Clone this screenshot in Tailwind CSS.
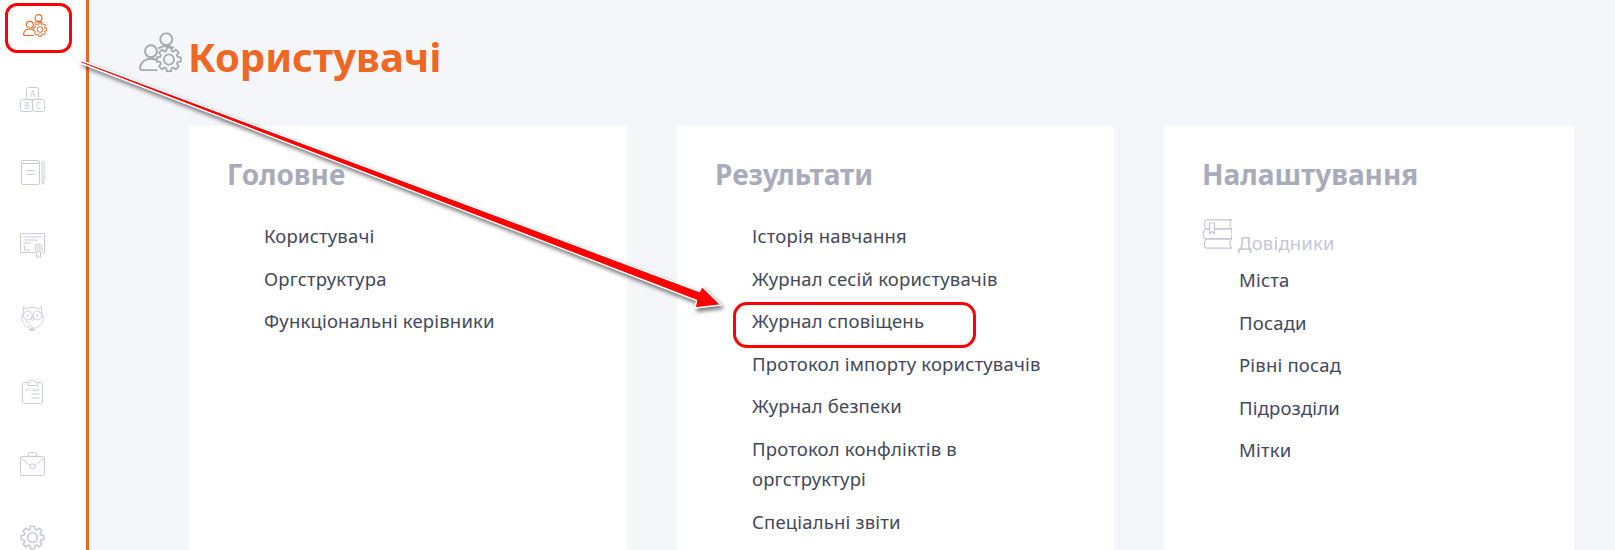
<!doctype html>
<html lang="uk">
<head>
<meta charset="utf-8">
<title>Користувачі</title>
<script src="https://cdn.jsdelivr.net/npm/@tailwindcss/browser@4"></script>
</head>
<body class="font-['Noto_Sans',sans-serif]">
<svg class="absolute w-0 h-0" aria-hidden="true">
  <symbol id="gear" viewBox="0 0 24 24">
    <path d="M22.83 13.91L19.84 14.4L19.24 15.85L21.01 18.31L18.31 21.01L15.85 19.24L14.4 19.84L13.91 22.83L10.09 22.83L9.6 19.84L8.15 19.24L5.69 21.01L2.99 18.31L4.76 15.85L4.16 14.4L1.17 13.91L1.17 10.09L4.16 9.6L4.76 8.15L2.99 5.69L5.69 2.99L8.15 4.76L9.6 4.16L10.09 1.17L13.91 1.17L14.4 4.16L15.85 4.76L18.31 2.99L21.01 5.69L19.24 8.15L19.84 9.6L22.83 10.09Z" fill="none" stroke="currentColor" stroke-width="1.6" stroke-linejoin="round"/>
    <circle cx="12" cy="12" r="4.6" fill="none" stroke="currentColor" stroke-width="1.6"/>
  </symbol>
  <symbol id="usersgear" viewBox="0 0 25 23">
    <g fill="none" stroke="currentColor" stroke-width="1.1">
      <circle cx="15.5" cy="4" r="3.4"/>
      <circle cx="6.8" cy="10.8" r="3.4"/>
      <path d="M10.5 21.5H2C1 21.5 .4 20.8 .6 19.8C1.1 17 3.5 15 6.8 15C8.2 15 9.4 15.4 10.4 16"/>
      <path d="M11 9.2C12.2 8.2 13.8 7.8 15.5 7.8C17.2 7.8 18.6 8.2 19.8 9"/>
    </g>
    <use href="#gear" x="9.5" y="8" width="15" height="15"/>
  </symbol>
</svg>

<div class="flex h-[550px] w-[1615px] overflow-hidden bg-[#f4f6fa] relative">
  <aside class="w-[89px] shrink-0 h-full bg-white border-r-[3px] border-[#ee6723] flex flex-col items-start gap-[48px] pl-[20px] pt-[14px] text-[#c9cadc]">
    <svg class="w-[25px] h-[25px] shrink-0 ml-[3px] -mt-[1px] mb-[1px] text-[#ee6723]" viewBox="0 0 25 25"><use href="#usersgear" x="0" y="1" width="25" height="23"/></svg>
    <svg class="w-[25px] h-[25px] shrink-0" viewBox="0 0 25 25" fill="none" stroke="currentColor" stroke-width="1">
      <rect x="6.5" y=".5" width="12" height="12" rx="2"/><rect x=".5" y="12.5" width="12" height="12" rx="2"/><rect x="12.5" y="12.5" width="12" height="12" rx="2"/>
      <text x="12.5" y="9.6" text-anchor="middle" font-size="8" fill="currentColor" stroke="none">A</text>
      <text x="6.5" y="21.6" text-anchor="middle" font-size="8" fill="currentColor" stroke="none">B</text>
      <text x="18.5" y="21.6" text-anchor="middle" font-size="8" fill="currentColor" stroke="none">C</text>
    </svg>
    <svg class="w-[25px] h-[25px] shrink-0" viewBox="0 0 25 25" fill="none" stroke="currentColor" stroke-width="1">
      <rect x="1.5" y=".5" width="18" height="24" rx="1.5"/><path d="M1.5 3.5H19.5M6.5 10.5H14.5M6.5 14.5H14.5"/>
      <path d="M22 2.5C22 1 24.2 1 24.2 2.5V21.5L23.1 24.5L22 21.5Z"/>
    </svg>
    <svg class="w-[25px] h-[25px] shrink-0" viewBox="0 0 25 25" fill="none" stroke="currentColor" stroke-width="1">
      <path d="M15 19.5H.5V.5H24.5V19.5H22"/><path d="M3.5 4H21.5M3.5 7H18M3.5 10H11M4.5 17V13M4.5 17H10"/>
      <circle cx="18.5" cy="15" r="3.8"/><circle cx="18.5" cy="15" r="1.6"/><path d="M16.5 18.5V24.5L18.5 23L20.5 24.5V18.5"/>
    </svg>
    <svg class="w-[25px] h-[25px] shrink-0" viewBox="0 0 25 25" fill="none" stroke="currentColor" stroke-width=".9">
      <path d="M3.5.5L6 2.8C8 1.8 11 1.4 12.5 1.4C14 1.4 17 1.8 19 2.8L21.5.5V7C23 9 23.5 11 23 14C22 19 17 22.5 12.5 22.5C8 22.5 3 19 2 14C1.5 11 2 9 3.5 7Z"/>
      <circle cx="7.8" cy="9.5" r="4.4"/><circle cx="17.2" cy="9.5" r="4.4"/><path d="M12.5 10L11 13L12.5 15L14 13ZM6 14.5C8 19 11 20.5 14.5 22M9 23.5H14M10 24.5H15"/>
      <circle cx="7.8" cy="9.5" r=".6" fill="currentColor"/><circle cx="17.2" cy="9.5" r=".6" fill="currentColor"/>
    </svg>
    <svg class="w-[25px] h-[25px] shrink-0" viewBox="0 0 25 25" fill="none" stroke="currentColor" stroke-width="1">
      <path d="M7.5 3.5H4.5C3.3 3.5 2.5 4.3 2.5 5.5V22.5C2.5 23.7 3.3 24.5 4.5 24.5H20.5C21.7 24.5 22.5 23.7 22.5 22.5V5.5C22.5 4.3 21.7 3.5 20.5 3.5H17.5"/>
      <path d="M7.5 6.5V3.5L10 2.8C10.5 .3 14.5 .3 15 2.8L17.5 3.5V6.5Z"/>
      <path d="M5.5 10.5L7 12L9.5 9M11.5 11H19.5M11.5 15H19.5M11.5 19H19.5"/>
    </svg>
    <svg class="w-[25px] h-[25px] shrink-0" viewBox="0 0 25 25" fill="none" stroke="currentColor" stroke-width="1">
      <rect x=".5" y="4.5" width="24" height="19" rx="1"/><path d="M.5 5.5L10 13.5M24.5 5.5L15 13.5M8.5 4.5V1.5C8.5 1 9 .5 9.5 .5H15.5C16 .5 16.5 1 16.5 1.5V4.5"/>
      <rect x="10" y="12" width="5" height="5" rx="2"/>
    </svg>
    <svg class="w-[25px] h-[25px] shrink-0" viewBox="0 0 25 25"><use href="#gear" width="25" height="25"/></svg>
  </aside>

  <main class="flex-1 min-w-0">
    <div class="flex items-start pl-[50px] pt-[32px] h-[126px]">
      <svg class="w-[44px] h-[41px] shrink-0 text-[#a9a9a9]" viewBox="0 0 25 23"><use href="#usersgear"/></svg>
      <h1 class="ml-[5px] -mt-[3px] text-[40px] leading-[56px] font-bold text-[#ee6723]">Користувачі</h1>
    </div>
    <div class="flex gap-[50px] pl-[100px] h-[424px]">
      <section class="w-[438px] shrink-0 bg-white pl-[38px] pt-[27px]">
        <h2 class="text-[28px] leading-[42px] font-bold text-[#a9abbb]">Головне</h2>
        <ul class="mt-[26px] pl-[37px] text-[18.5px] tracking-[0.18px] leading-[30px] text-[#43475a] flex flex-col gap-[12.6px]">
          <li>Користувачі</li><li>Оргструктура</li><li>Функціональні керівники</li>
        </ul>
      </section>
      <section class="w-[437px] shrink-0 bg-white pl-[38px] pt-[27px]">
        <h2 class="text-[28px] leading-[42px] font-bold text-[#a9abbb]">Результати</h2>
        <ul class="mt-[26px] pl-[37px] pr-[60px] text-[18.5px] tracking-[0.18px] leading-[30px] text-[#43475a] flex flex-col gap-[12.6px]">
          <li>Історія навчання</li><li>Журнал сесій користувачів</li><li>Журнал сповіщень</li><li>Протокол імпорту користувачів</li><li>Журнал безпеки</li><li>Протокол конфліктів в оргструктурі</li><li>Спеціальні звіти</li>
        </ul>
      </section>
      <section class="w-[410px] shrink-0 bg-white pl-[38px] pt-[27px]">
        <h2 class="text-[28px] leading-[42px] font-bold text-[#a9abbb]">Налаштування</h2>
        <div class="mt-[24px] flex items-end text-[#c5c6d6]">
          <svg class="w-[30px] h-[30px] shrink-0" viewBox="0 0 30 30" fill="none" stroke="currentColor" stroke-width="1.2">
            <path d="M29.5.8H5C1.5.8 1.5 9.8 5 9.8H29.5C27.5 8 27.5 2.6 29.5.8Z"/>
            <path d="M29.5 9.8H4C.5 9.8.5 19.8 4 19.8H29.5C30 17 30 12.6 29.5 9.8Z"/>
            <path d="M29.5 19.8H5C1.5 19.8 1.5 29.2 5 29.2H29.5C27.5 27.5 27.5 21.5 29.5 19.8Z"/>
            <path d="M7.5 4V14.5L10 12.5L12.5 14.5V4Z" fill="#fff"/>
          </svg>
          <span class="ml-[6px] text-[18.5px] tracking-[0.18px] leading-[26px] -mb-[7px]">Довідники</span>
        </div>
        <ul class="mt-[16px] pl-[37px] text-[18.5px] tracking-[0.18px] leading-[30px] text-[#43475a] flex flex-col gap-[12.6px]">
          <li>Міста</li><li>Посади</li><li>Рівні посад</li><li>Підрозділи</li><li>Мітки</li>
        </ul>
      </section>
    </div>
  </main>

  <div class="absolute left-[5px] top-[3px] w-[67px] h-[50px] border-[3px] border-[#f00] rounded-[12px]"></div>
  <div class="absolute left-[733px] top-[302px] w-[243px] h-[46px] border-[3px] border-[#f00] rounded-[14px]"></div>
  <svg class="absolute left-0 top-0 w-[1615px] h-[550px] pointer-events-none drop-shadow-[2px_3px_2px_rgba(0,0,0,0.55)]" viewBox="0 0 1615 550">
    <polygon points="81,60.5 699.5,291.5 702,286.5 721,305 695,308 696.5,300.5 80.5,63" fill="#f00" stroke="#fff" stroke-width="1.4" stroke-linejoin="round"/>
  </svg>
</div>
</body>
</html>
